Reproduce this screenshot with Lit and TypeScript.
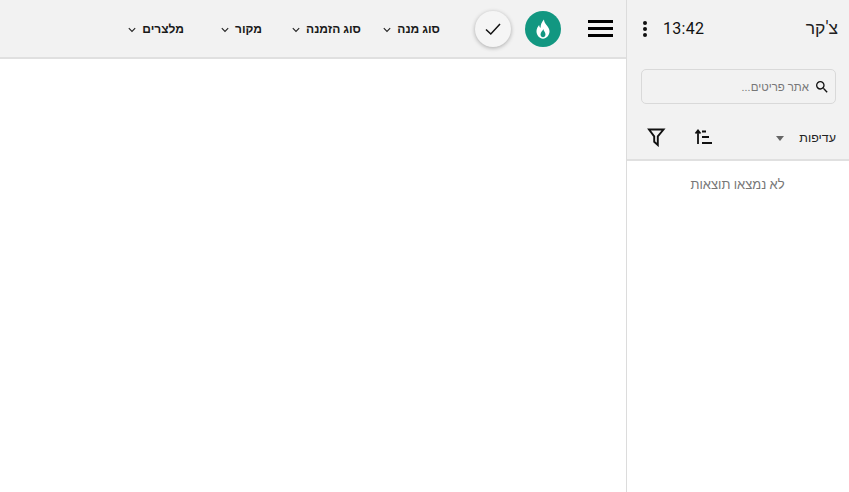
import { LitElement, html, css } from "lit";
import { customElement } from "lit/decorators.js";

const filters = [
  { label: "סוג מנה", width: 79 },
  { label: "סוג הזמנה", width: 99 },
  { label: "מקור", width: 78 },
  { label: "מלצרים", width: 60 },
];

@customElement("app-root")
export class AppRoot extends LitElement {
  static styles = css`
    :host { display: block; width: 849px; height: 492px; overflow: hidden; background: #fff; font-family: Roboto, "Noto Sans", "Liberation Sans", sans-serif; color: #000; }
    .app { display: flex; direction: rtl; height: 492px; }
    .side { width: 222px; flex: none; border-left: 1px solid #dcdcdc; display: flex; flex-direction: column; }
    .side-head { background: #f2f2f2; border-bottom: 2px solid #e0e0e0; height: 159px; box-sizing: content-box; display: flex; flex-direction: column; }
    .title-row { display: flex; align-items: center; height: 57px; padding: 0 11px 0 0; }
    .title { font-size: 17.5px; line-height: 24px; color: #222; flex: 1; margin-top: -1px; }
    .clock { font-size: 16px; letter-spacing: 0.3px; color: #111; direction: ltr; margin-top: -1px; }
    .dots { width: 4px; display: flex; flex-direction: column; gap: 2px; margin: 0 16px 0 16px; }
    .dots i { width: 4px; height: 4px; border-radius: 50%; background: #111; display: block; }
    .search { margin: 12px 13px 0 14px; height: 33px; border: 1px solid #d9d9d9; border-radius: 5px; display: flex; align-items: center; padding: 0 5px; gap: 5px; background: #f2f2f2; }
    .search svg { flex: none; }
    .search span { font-size: 11.5px; color: #777; }
    .tools { display: flex; align-items: center; height: 40px; margin-top: 13px; padding-right: 13px; }
    .tools .fav { font-size: 12.5px; color: #222; }
    .tools .caret { width: 0; height: 0; border-left: 4px solid transparent; border-right: 4px solid transparent; border-top: 5px solid #666; margin: 2px 15px 0 0; }
    .sort { margin-right: 62px; display: block; }
    .funnel { margin-right: 28px; display: block; margin-top: -1px; }
    .empty { text-align: center; font-size: 13px; color: #777; margin-top: 15px; line-height: 18px; padding-right: 1px; }
    .main { flex: 1; min-width: 0; }
    .top { height: 57px; background: #f2f2f2; border-bottom: 2px solid #e0e0e0; display: flex; align-items: center; }
    .burger { width: 25px; display: flex; flex-direction: column; gap: 4px; margin: 0 13px 0 0; }
    .burger i { display: block; height: 3px; background: #000; }
    .fab { width: 36px; height: 36px; border-radius: 50%; display: flex; align-items: center; justify-content: center; flex: none; box-shadow: 0 1px 4px rgba(0,0,0,.3); }
    .fire { background: #129781; margin-right: 27px; box-shadow: none; }
    .check { background: #f5f5f5; margin-right: 14px; }
    .filters { display: flex; margin-right: 35px; }
    .filter { display: flex; align-items: center; gap: 6px; font-size: 12px; font-weight: 700; color: #1a1a1a; flex: none; }
    .filter svg { display: block; margin-top: 2px; }
  `;

  render() {
    return html`<div class="app">
      <aside class="side">
        <div class="side-head">
          <div class="title-row">
            <span class="title">צ'קר</span>
            <span class="clock">13:42</span>
            <span class="dots"><i></i><i></i><i></i></span>
          </div>
          <div class="search">
            <svg width="16" height="16" viewBox="0 0 24 24"><path fill="#111" d="M15.5 14h-.79l-.28-.27A6.47 6.47 0 0 0 16 9.5 6.5 6.5 0 1 0 9.5 16c1.61 0 3.09-.59 4.23-1.57l.27.28v.79l5 4.99L20.49 19l-4.99-5zm-6 0C7.01 14 5 11.99 5 9.5S7.01 5 9.5 5 14 7.01 14 9.5 11.99 14 9.500 14z"/></svg>
            <span>אתר פריטים...</span>
          </div>
          <div class="tools">
            <span class="fav">עדיפות</span>
            <span class="caret"></span>
            <svg class="sort" width="20" height="18" viewBox="0 0 20 18"><path fill="none" stroke="#111" stroke-width="1.8" d="M4 16V2.500M1.500 5.500 4 2.500l2.500 3M8 3.500h4M8 9h7M8 15h10"/></svg>
            <svg class="funnel" width="20" height="20" viewBox="0 0 20 20"><path fill="none" stroke="#111" stroke-width="1.900" stroke-linejoin="miter" d="M3 2.500h14.500l-5.700 6.800v8.700l-3.600-3.200v-5.500z"/></svg>
          </div>
        </div>
        <div class="empty">לא נמצאו תוצאות</div>
      </aside>
      <main class="main">
        <div class="top">
          <div class="burger"><i></i><i></i><i></i></div>
          <div class="fab fire">
            <svg width="22" height="22" viewBox="0 0 24 24"><path fill="#fff" fill-rule="evenodd" d="M13 1.500c.3 3 1.500 4.500 3 6.300 1.800 2.100 3.100 4.100 3.100 6.700 0 4.400-3.200 8-7.100 8s-7.100-3.600-7.100-8c0-2.700 1.100-5 2.900-7 .1 1.500.6 2.500 1.600 3.200C9.200 7.700 10.600 4.200 13 1.500zM12.300 12c-.2 1.700-3 3.200-3 5.700 0 1.900 1.200 3.300 2.700 3.300s2.700-1.400 2.700-3.300c0-2.400-2.200-3.800-2.400-5.700z"/></svg>
          </div>
          <div class="fab check">
            <svg width="18" height="18" viewBox="0 0 18 18"><path fill="none" stroke="#111" stroke-width="1.500" d="M2 9.500 6.800 14 16 4"/></svg>
          </div>
          <div class="filters">
            ${filters.map(f => html`<div class="filter" style="width:${f.width}px"><span>${f.label}</span>
              <svg width="8" height="6" viewBox="0 0 8 6"><path fill="none" stroke="#222" stroke-width="1.100" d="M.8 1.200 4 4.400l3.200-3.200"/></svg></div>`)}
          </div>
        </div>
      </main>
    </div>`;
  }
}
